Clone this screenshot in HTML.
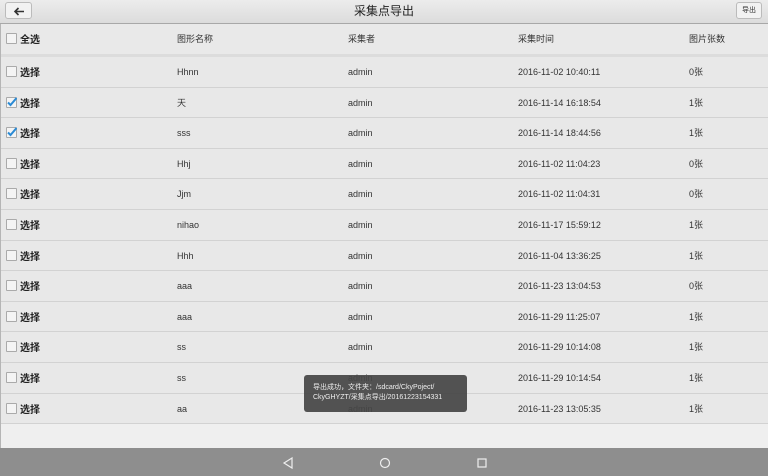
<!DOCTYPE html>
<html><head><meta charset="utf-8"><style>
*{margin:0;padding:0;box-sizing:border-box}
html,body{width:768px;height:476px;overflow:hidden}
body{background:#efefef;font-family:"Liberation Sans","Noto Sans CJK SC",sans-serif;position:relative}
.top{position:absolute;left:0;top:0;width:768px;height:24px;background:linear-gradient(#ececec,#dcdcdc);border-bottom:1px solid #a8a8a8}
.title{position:absolute;left:0;width:768px;top:0;line-height:22px;text-align:center;font-size:12px;color:#222}
.back{position:absolute;left:5px;top:2px;width:27px;height:17px;border:1px solid #bbb;border-radius:3px;background:#f2f2f2}
.exp{position:absolute;right:6px;top:2px;width:26px;height:17px;border:1px solid #bbb;border-radius:3px;background:#f2f2f2;font-size:7px;text-align:center;line-height:15px;color:#333}
.left{position:absolute;left:0;top:24px;width:1px;height:424px;background:#b5b5b5}
.row{position:absolute;left:1px;width:767px;height:30.6px;background:#e8e8e8;border-bottom:1px solid #d2d2d2;font-size:9px;color:#333;overflow:hidden}
.row span{position:absolute;top:0;line-height:30px}
.row span.sel{top:2px}
.cb{position:absolute;left:5px;top:9px;width:11px;height:11px;border:1px solid #aaa;background:#f4f4f4;border-radius:1px}
.sel{left:19px;font-size:10px;font-weight:bold;color:#222}
.c2{left:176px}.c3{left:347px}.c4{left:517px}.c5{left:688px}
.nav{position:absolute;left:0;top:448px;width:768px;height:28px;background:#8e8e8e}
.toast{position:absolute;left:304px;top:375px;width:163px;height:37px;background:rgba(70,70,70,.93);border-radius:3px;color:#eee;font-size:7px;line-height:10px;padding:8px 0 0 9px}
</style></head><body>
<div class="top"><div class="title">采集点导出</div>
<div class="back"><svg width="27" height="17" viewBox="0 0 27 17"><path d="M18 8.5H9M12.5 5L9 8.5 12.5 12" stroke="#333" stroke-width="1.6" fill="none"/></svg></div>
<div class="exp">导出</div></div>
<div class="row" style="top:24px;height:33px;border-bottom:3px solid #dcdcdc;background:#e9e9e9"><div class="cb"></div><span class="sel">全选</span><span class="c2">图形名称</span><span class="c3">采集者</span><span class="c4">采集时间</span><span class="c5">图片张数</span></div>
<div id="rows"></div>
<div class="left"></div>
<div class="toast">导出成功，文件夹：/sdcard/CkyPoject/<br>CkyGHYZT/采集点导出/20161223154331</div>
<div class="nav"><svg width="768" height="28"><path d="M292 10L284 15 292 20Z" fill="none" stroke="#eee" stroke-width="1.2"/><circle cx="385" cy="15" r="4.5" fill="none" stroke="#eee" stroke-width="1.2"/><rect x="478" y="11" width="8" height="8" fill="none" stroke="#eee" stroke-width="1.2"/></svg></div>
<script>
var d=[["Hhnn","2016-11-02 10:40:11","0张",0],["天","2016-11-14 16:18:54","1张",1],["sss","2016-11-14 18:44:56","1张",1],["Hhj","2016-11-02 11:04:23","0张",0],["Jjm","2016-11-02 11:04:31","0张",0],["nihao","2016-11-17 15:59:12","1张",0],["Hhh","2016-11-04 13:36:25","1张",0],["aaa","2016-11-23 13:04:53","0张",0],["aaa","2016-11-29 11:25:07","1张",0],["ss","2016-11-29 10:14:08","1张",0],["ss","2016-11-29 10:14:54","1张",0],["aa","2016-11-23 13:05:35","1张",0]];
var h="";d.forEach(function(r,i){var t=57+i*30.6;
var cb=r[3]?'<svg class="cb" style="border:none;background:none" width="11" height="11"><rect x=".5" y=".5" width="10" height="10" fill="#f4f4f4" stroke="#aaa"/><path d="M2 5.5L4.5 8 10.5 1" stroke="#2a8ad4" stroke-width="2" fill="none"/></svg>':'<div class="cb"></div>';
h+='<div class="row" style="top:'+t+'px">'+cb+'<span class="sel">选择</span><span class="c2">'+r[0]+'</span><span class="c3">admin</span><span class="c4">'+r[1]+'</span><span class="c5">'+r[2]+'</span></div>';});
document.getElementById("rows").innerHTML=h;
</script>
</body></html>
